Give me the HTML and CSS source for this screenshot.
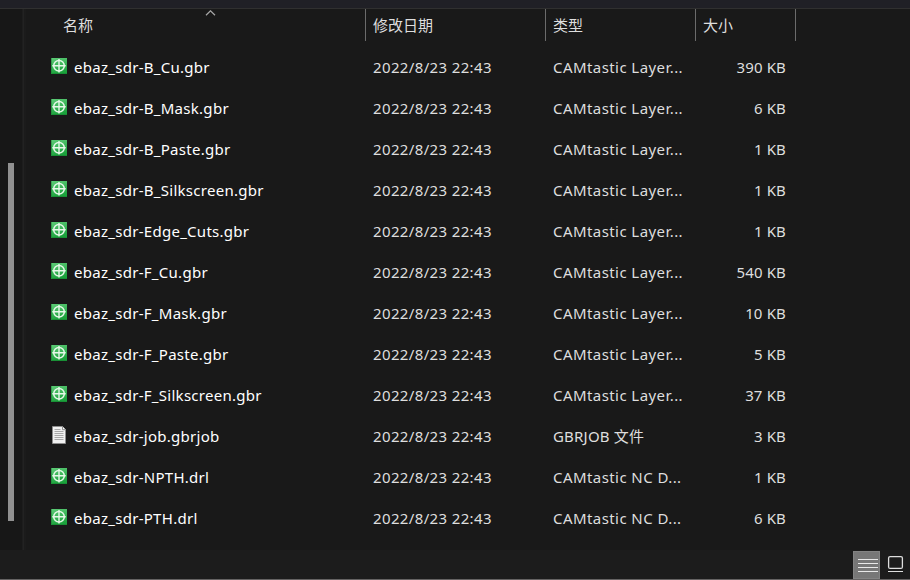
FILE: index.html
```html
<!DOCTYPE html>
<html lang="zh-CN">
<head>
<meta charset="utf-8">
<title>ebaz_sdr</title>
<link rel="stylesheet" href="styles.css">
</head>
<body>
<svg class="defs" width="0" height="0">
  <defs>
    <linearGradient id="green" x1="0" y1="0" x2="0.3" y2="1"><stop offset="0" stop-color="#5fcb78"/><stop offset="1" stop-color="#1ba23c"/></linearGradient>
    <symbol id="cam" viewBox="0 0 16 16">
      <rect width="16" height="16" fill="url(#green)"/>
      <path d="M.5 0V15.5H16" fill="none" stroke="#16782c" opacity=".45"/>
      <circle cx="8" cy="7.7" r="5.3" fill="none" stroke="#e6f8e9" stroke-width="1.5"/>
      <path d="M8 1v13.5M1.3 7.7h13.4" stroke="#e6f8e9" stroke-width="1.4"/>
    </symbol>
    <symbol id="doc" viewBox="0 0 16 18">
      <path d="M1.5.5h10l3 3v14h-13z" fill="#f1f1f1" stroke="#8d8d8d"/>
      <path d="M11.5.5v3.2h3" fill="#fff" stroke="#8d8d8d"/>
      <path d="M3.5 3.5h6M3.5 5.5h9M3.5 7.5h9M3.5 9.5h9M3.5 11.5h9M3.5 13.5h9" stroke="#a9a9a9"/>
    </symbol>
  </defs>
</svg>
<div class="window">
  <div class="toolbar"></div>
  <div class="content">
    <div class="nav"><div class="thumb"></div></div>
    <div class="splitter"></div>
    <main class="list">
      <div class="grid head">
        <div class="cell first">名称<svg class="sort" width="11" height="6" viewBox="0 0 11 6"><path d="M1 5.2 5.5.8 10 5.2" fill="none" stroke="#a8a8a8" stroke-width="1.2"/></svg></div>
        <div class="cell">修改日期</div>
        <div class="cell">类型</div>
        <div class="cell">大小</div>
      </div>
      <div id="rows"></div>
    </main>
  </div>
  <footer class="status">
    <div class="view active"><svg width="27" height="28" viewBox="0 0 27 28"><path d="M5 8.5h20M5 12.5h20M5 16.5h20M5 20.5h20" stroke="#e8e8e8"/></svg></div>
    <div class="view"><svg width="27" height="28" viewBox="0 0 27 28"><rect x="7.6" y="5.6" width="13.8" height="11.8" rx="1.5" fill="none" stroke="#dedede" stroke-width="1.3"/><path d="M7 20.5h15" stroke="#dedede"/></svg></div>
  </footer>
</div>
<script src="rows.js"></script>
</body>
</html>
```
FILE: styles.css
```css
* { box-sizing: border-box; }
body {
  margin: 0;
  background: #191919;
  color: #dedede;
  font-family: "Noto Sans", "Noto Sans CJK SC", sans-serif;
  font-size: 15px;
}
.defs { position: absolute; }
.window { display: flex; flex-direction: column; width: 910px; height: 580px; overflow: hidden; }
.toolbar { height: 9px; background: #202026; border-bottom: 1px solid #303030; }
.content { display: flex; flex: 1; min-height: 0; }
.nav { width: 22px; padding: 154px 0 0 8px; background: #171717; }
.thumb { width: 6px; height: 358px; background: #919191; }
.splitter { width: 4px; background: #222; border-left: 1px solid #1d1d1d; border-right: 2px solid #1b1b1b; }
.list { flex: 1; padding-left: 25px; }
.grid { display: grid; grid-template-columns: 315px 180px 150px 100px; }
.head { height: 38px; }
.head .cell {
  position: relative;
  height: 32px;
  padding-left: 7px;
  border-right: 1px solid #6b6b6b;
  line-height: 31px;
  font-family: "Noto Sans CJK SC", sans-serif;
}
.head .first { padding-left: 12px; }
.sort { position: absolute; left: 154px; top: 1px; }
.row { height: 41px; line-height: 41px; white-space: nowrap; }
.name { display: flex; color: #fff; letter-spacing: 0.28px; }
.icon { width: 16px; height: 16px; margin: 11px 7px 0 0; }
.icon.doc { height: 18px; margin-top: 10px; }
.date { padding-left: 7px; letter-spacing: 0.36px; }
.type { padding-left: 7px; letter-spacing: 0.43px; }
.doc-type { letter-spacing: 0.2px; }
.size { padding-right: 10px; text-align: right; letter-spacing: 0.15px; }
.status { display: flex; justify-content: flex-end; gap: 1px; height: 30px; padding: 1px 2px 0 0; background: #1c1c1c; border-bottom: 1px solid #656363; }
.view { width: 27px; height: 28px; }
.view svg { display: block; }
.view.active { background: #777; border: 1px solid #838383; }
.view.active svg { margin: -1px; }
```
FILE: rows.js
```js
const camLayer = "CAMtastic Layer...";
const camDrill = "CAMtastic NC D...";
const files = [
  ["B_Cu.gbr", camLayer, 390],
  ["B_Mask.gbr", camLayer, 6],
  ["B_Paste.gbr", camLayer, 1],
  ["B_Silkscreen.gbr", camLayer, 1],
  ["Edge_Cuts.gbr", camLayer, 1],
  ["F_Cu.gbr", camLayer, 540],
  ["F_Mask.gbr", camLayer, 10],
  ["F_Paste.gbr", camLayer, 5],
  ["F_Silkscreen.gbr", camLayer, 37],
  ["job.gbrjob", "GBRJOB 文件", 3],
  ["NPTH.drl", camDrill, 1],
  ["PTH.drl", camDrill, 6]
];
document.getElementById("rows").innerHTML = files.map(([name, type, size]) => {
  const icon = name.endsWith("job") ? "doc" : "cam";
  return `<div class="grid row">
    <div class="name"><svg class="icon ${icon}"><use href="#${icon}"/></svg><span>ebaz_sdr-${name}</span></div>
    <div class="date">2022/8/23 22:43</div>
    <div class="type ${icon}-type">${type}</div>
    <div class="size">${size} KB</div>
  </div>`;
}).join("");
```
